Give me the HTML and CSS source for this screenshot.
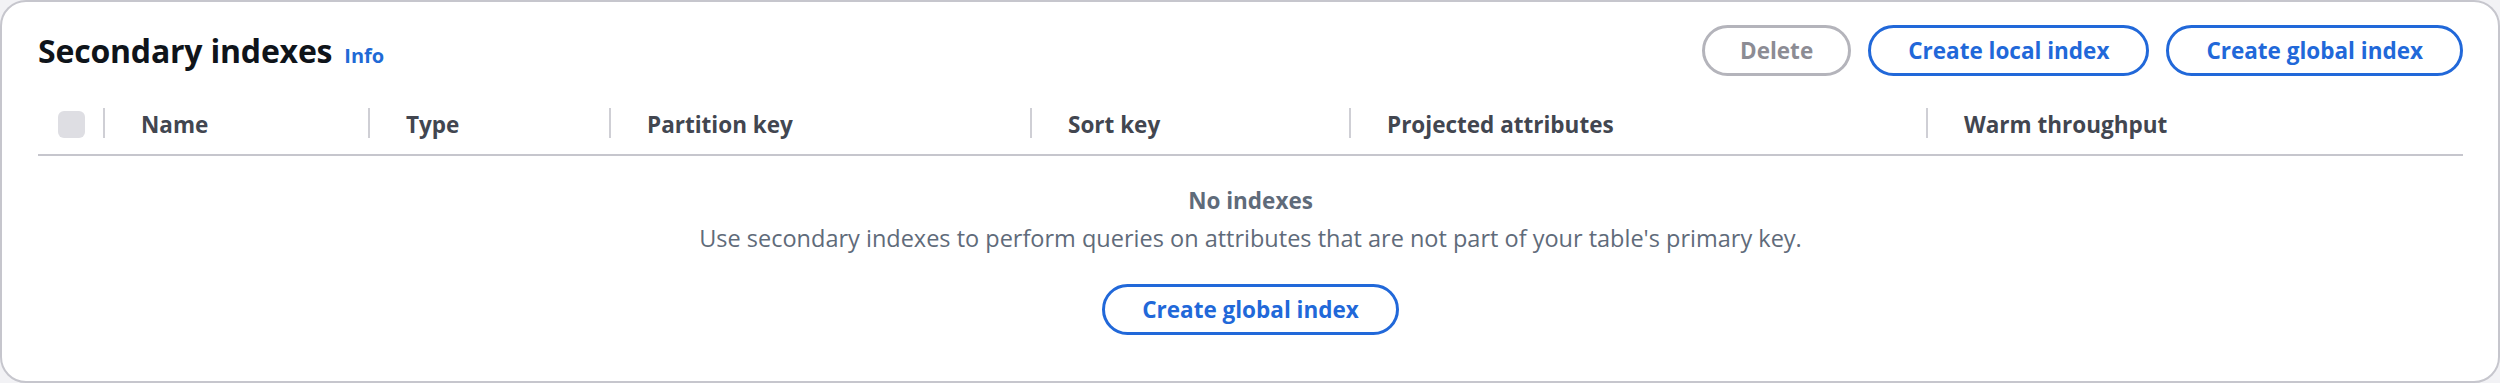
FILE: index.html
```html
<!DOCTYPE html>
<html lang="en">
<head>
<meta charset="utf-8">
<title>Secondary indexes</title>
<link rel="stylesheet" href="styles.css">
</head>
<body>
<section class="panel">
  <header class="panel-header">
    <div class="title-group">
      <h2 class="title">Secondary indexes</h2>
      <a class="info-link" href="#">Info</a>
    </div>
    <div class="actions">
      <button class="btn btn-disabled" disabled>Delete</button>
      <button class="btn">Create local index</button>
      <button class="btn">Create global index</button>
    </div>
  </header>
  <div class="table-head">
    <div class="cell cell-check"><span class="checkbox"></span></div>
    <div class="cell">Name</div>
    <div class="cell">Type</div>
    <div class="cell">Partition key</div>
    <div class="cell">Sort key</div>
    <div class="cell">Projected attributes</div>
    <div class="cell">Warm throughput</div>
  </div>
  <div class="empty">
    <div class="empty-title">No indexes</div>
    <div class="empty-desc">Use secondary indexes to perform queries on attributes that are not part of your table's primary key.</div>
    <button class="btn btn-empty">Create global index</button>
  </div>
</section>
</body>
</html>
```
FILE: styles.css
```css
html, body {
  margin: 0;
  padding: 0;
}
body {
  background: #f2f2f5;
  font-family: "Open Sans", "Noto Sans", sans-serif;
}
.panel {
  box-sizing: border-box;
  width: 2500px;
  height: 383px;
  background: #ffffff;
  border: 2px solid #c6c6cd;
  border-radius: 26px;
  padding: 23px 35px 0 36px;
}
.panel-header {
  display: flex;
  justify-content: space-between;
  align-items: center;
  height: 51px;
}
.title-group {
  display: flex;
  align-items: baseline;
  gap: 12px;
}
.title {
  margin: 0;
  font-size: 32px;
  font-weight: 700;
  color: #0f141a;
  letter-spacing: -0.2px;
}
.info-link {
  font-size: 20px;
  font-weight: 700;
  color: #1f6ad6;
  text-decoration: none;
}
.actions {
  display: flex;
  gap: 17px;
}
.btn {
  box-sizing: border-box;
  height: 51px;
  padding: 0 37px;
  border: 3px solid #2168d9;
  border-radius: 26px;
  background: #ffffff;
  color: #2168d9;
  font-family: "Open Sans", "Noto Sans", sans-serif;
  font-size: 22.5px;
  font-weight: 700;
  white-space: nowrap;
}
.btn-disabled {
  padding: 0 35px;
  border-color: #b4b4bb;
  color: #8c8c94;
}
.table-head {
  display: grid;
  grid-template-columns: 65px 265px 241px 421px 319px 577px 1fr;
  height: 60px;
  margin-top: 18px;
  border-bottom: 2px solid #c6c6cd;
}
.cell {
  position: relative;
  display: flex;
  align-items: center;
  padding-left: 38px;
  font-size: 22.5px;
  font-weight: 700;
  color: #424650;
}
.cell::before {
  content: "";
  position: absolute;
  left: 0;
  top: 14px;
  width: 2px;
  height: 30px;
  background: #cfcfd5;
}
.cell-check {
  padding-left: 20px;
}
.cell-check::before {
  display: none;
}
.checkbox {
  width: 27px;
  height: 27px;
  border-radius: 6px;
  background: #dedee3;
}
.empty {
  display: flex;
  flex-direction: column;
  align-items: center;
  padding-top: 27px;
}
.empty-title {
  font-size: 22.5px;
  font-weight: 700;
  line-height: 36px;
  color: #5f6b7a;
}
.empty-desc {
  margin-top: 1px;
  font-size: 23.5px;
  line-height: 36px;
  color: #5f6b7a;
}
.btn-empty {
  margin-top: 28px;
}
```
